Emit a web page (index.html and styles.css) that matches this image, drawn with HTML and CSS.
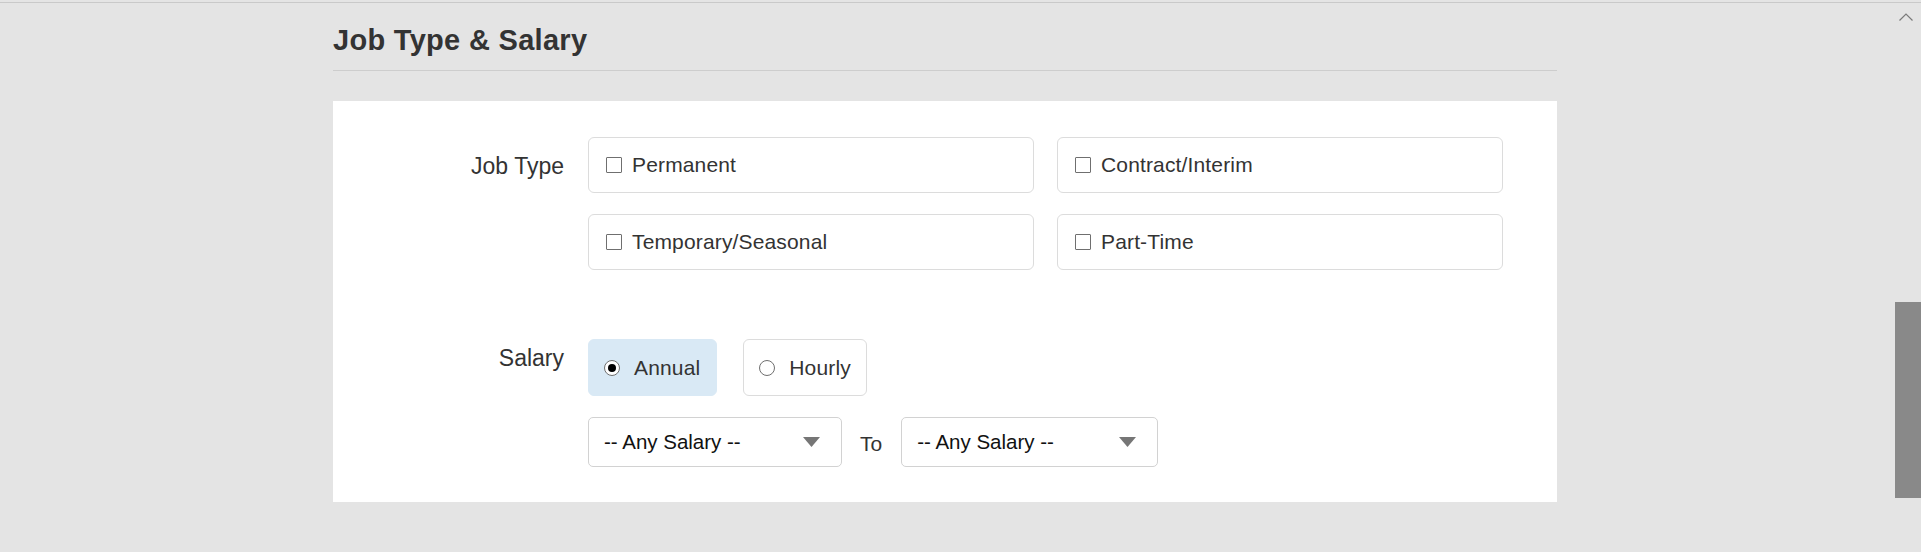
FILE: index.html
```html
<!DOCTYPE html>
<html lang="en">
<head>
<meta charset="utf-8">
<title>Job Type &amp; Salary</title>
<link rel="stylesheet" href="styles.css">
</head>
<body>
<div class="frame">
  <main class="main">
    <section class="section">
      <h2 class="section-title">Job Type &amp; Salary</h2>
      <div class="panel">
        <div class="field-label label-jobtype">Job Type</div>
        <div class="options">
          <label class="option"><span class="checkbox"></span><span class="option-text">Permanent</span></label>
          <label class="option"><span class="checkbox"></span><span class="option-text">Contract/Interim</span></label>
          <label class="option"><span class="checkbox"></span><span class="option-text">Temporary/Seasonal</span></label>
          <label class="option"><span class="checkbox"></span><span class="option-text">Part-Time</span></label>
        </div>

        <div class="field-label label-salary">Salary</div>
        <div class="salary">
          <div class="pills">
            <label class="pill pill-active"><span class="radio radio-checked"></span><span class="option-text">Annual</span></label>
            <label class="pill"><span class="radio"></span><span class="option-text">Hourly</span></label>
          </div>
          <div class="range">
            <div class="select select-from">
              <span class="select-text">-- Any Salary --</span>
              <svg class="select-arrow" width="17" height="10" viewBox="0 0 17 10"><polygon points="0,0 17,0 8.5,10" fill="#767676"/></svg>
            </div>
            <span class="range-to">To</span>
            <div class="select select-to">
              <span class="select-text">-- Any Salary --</span>
              <svg class="select-arrow" width="17" height="10" viewBox="0 0 17 10"><polygon points="0,0 17,0 8.5,10" fill="#767676"/></svg>
            </div>
          </div>
        </div>
      </div>
    </section>
  </main>
  <div class="scrollbar">
    <svg class="scroll-up" width="14" height="8" viewBox="0 0 14 8"><polyline points="0.5,7.5 7,1 13.5,7.5" fill="none" stroke="#7a7a7a" stroke-width="1.2"/></svg>
    <div class="scroll-thumb"></div>
  </div>
</div>
</body>
</html>
```

FILE: styles.css
```css
* {
  box-sizing: border-box;
}

html, body {
  margin: 0;
  padding: 0;
}

body {
  background: #e4e4e4;
  padding-top: 2px;
  font-family: "Liberation Sans", Arial, sans-serif;
  color: #333;
  height: 552px;
  overflow: hidden;
}

.frame {
  display: flex;
  border-top: 1px solid #c9c9c9;
  height: 550px;
}

.main {
  width: 1890px;
  flex: none;
}

.section {
  width: 1224px;
  margin: 0 auto;
}

.section-title {
  margin: 20px 0 0;
  padding-bottom: 13px;
  font-size: 29px;
  line-height: 34px;
  font-weight: bold;
  letter-spacing: 0.3px;
  color: #333;
  border-bottom: 1px solid #cdcdcd;
}

.panel {
  margin-top: 30px;
  background: #fff;
  padding: 36px 0 35px;
  display: grid;
  grid-template-columns: 231px 1fr;
  column-gap: 24px;
  row-gap: 69px;
}

.field-label {
  text-align: right;
  font-size: 23px;
  line-height: 27px;
  color: #333;
}

.label-jobtype {
  padding-top: 16px;
}

.label-salary {
  padding-top: 6px;
}

.options {
  display: grid;
  grid-template-columns: 446px 446px;
  column-gap: 23px;
  row-gap: 21px;
}

.option {
  height: 56px;
  border: 1px solid #dcdcdc;
  border-radius: 6px;
  display: flex;
  align-items: center;
  gap: 10px;
  padding-left: 17px;
}

.checkbox {
  width: 16px;
  height: 16px;
  border: 1px solid #6f6f6f;
  border-radius: 1px;
  background: #fff;
  flex: none;
}

.option-text {
  font-size: 21px;
  letter-spacing: 0.15px;
  color: #333;
}

.pills {
  display: flex;
  gap: 26px;
}

.pill {
  height: 57px;
  border: 1px solid #dcdcdc;
  border-radius: 6px;
  display: flex;
  align-items: center;
  gap: 14px;
  padding: 0 15px 0 15px;
  background: #fff;
}

.pill-active {
  background: #d9e9f5;
  border-color: #d9e9f5;
  padding-right: 16px;
}

.radio {
  width: 16px;
  height: 16px;
  border: 1px solid #6f6f6f;
  border-radius: 50%;
  background: #fff;
  flex: none;
  display: flex;
  align-items: center;
  justify-content: center;
}

.radio-checked::after {
  content: "";
  width: 8px;
  height: 8px;
  border-radius: 50%;
  background: #000;
}

.range {
  display: flex;
  align-items: center;
  margin-top: 21px;
}

.select {
  height: 50px;
  border: 1px solid #d2d2d2;
  border-radius: 5px;
  display: flex;
  align-items: center;
  justify-content: space-between;
  padding: 0 21px 0 15px;
  background: #fff;
}

.select-from {
  width: 254px;
}

.select-to {
  width: 257px;
}

.select-text {
  font-size: 20.5px;
  color: #111;
}

.select-arrow {
  display: block;
}

.range-to {
  font-size: 21px;
  color: #333;
  padding: 4px 19px 0 18px;
}

.scrollbar {
  flex: none;
  width: 31px;
  padding-top: 10px;
}

.scroll-up {
  display: block;
  margin-left: 9px;
}

.scroll-thumb {
  margin-top: 281px;
  margin-left: 5px;
  width: 26px;
  height: 196px;
  background: #898989;
}
```
